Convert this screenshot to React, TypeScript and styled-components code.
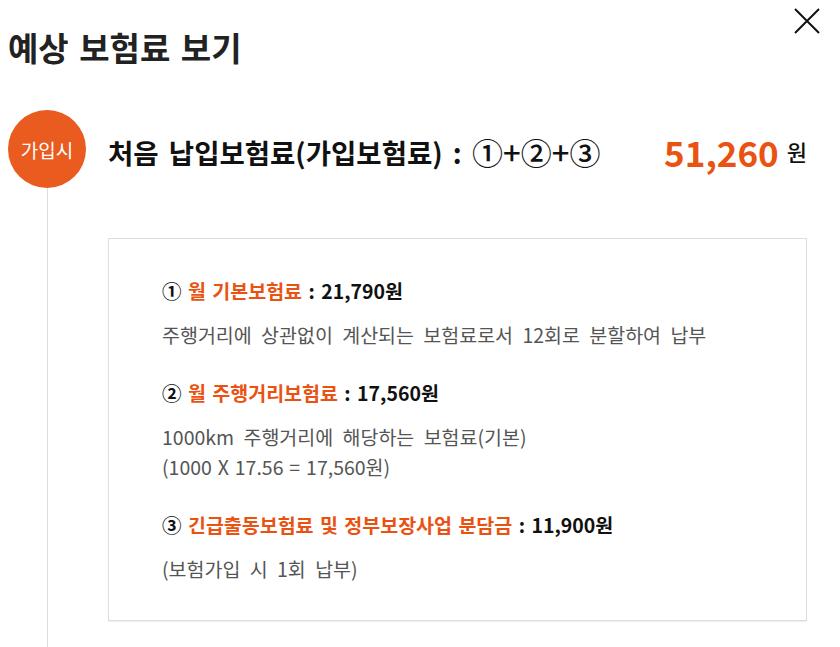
import * as React from 'react'
import styled, { createGlobalStyle } from 'styled-components'

const GlobalStyle = createGlobalStyle`
  html, body {
    margin: 0;
    padding: 0;
    background: #fff;
  }
  body {
    font-family: 'Noto Sans CJK KR', 'Noto Sans', sans-serif;
    color: #222;
  }
`

const Modal = styled.div`
  position: relative;
  width: 840px;
  height: 647px;
  overflow: hidden;
  box-sizing: border-box;
  padding: 22px 0 0 8px;
`

const Title = styled.h1`
  margin: 0;
  font-size: 33px;
  font-weight: 700;
  word-spacing: 3px;
  color: #222;
  line-height: 50px;
`

const CloseButton = styled.button`
  position: absolute;
  top: 6px;
  right: 18px;
  width: 30px;
  height: 30px;
  padding: 0;
  border: 0;
  background: none;
  cursor: pointer;
`

const Timeline = styled.div`
  display: flex;
  margin-top: 38px;
`

const Rail = styled.div`
  width: 78px;
  flex-shrink: 0;
  display: flex;
  flex-direction: column;
  align-items: center;
`

const Badge = styled.div`
  width: 78px;
  height: 78px;
  border-radius: 50%;
  background: #ea5b1f;
  color: #fff;
  font-size: 19px;
  display: flex;
  align-items: center;
  justify-content: center;
`

const Line = styled.div`
  width: 1px;
  flex: 1;
  background: #ddd;
  min-height: 460px;
`

const Content = styled.div`
  flex: 1;
  padding-left: 22px;
  padding-right: 33px;
`

const Summary = styled.div`
  display: flex;
  align-items: center;
  height: 82px;
`

const SummaryLabel = styled.span`
  flex: 1;
  font-size: 27.5px;
  font-weight: 700;
  color: #111;
  word-spacing: 4px;
`

const Formula = styled.span`
  font-size: 31px;
  font-weight: 500;
  vertical-align: -1px;
`

const Total = styled.span`
  color: #ea5212;
  font-size: 35px;
  font-weight: 700;
`

const Won = styled.span`
  font-size: 22px;
  font-weight: 500;
  color: #111;
  margin-left: 8px;
`

const DetailBox = styled.div`
  margin-top: 46px;
  border: 1px solid #ddd;
  box-shadow: 0 1px 1px rgba(0, 0, 0, 0.06);
  padding: 38px 20px 36px 53px;
  display: flex;
  flex-direction: column;
  gap: 29px;
`

const Item = styled.div`
  display: flex;
  flex-direction: column;
  gap: 15px;
`

const ItemTitle = styled.div`
  font-size: 19.5px;
  font-weight: 700;
  color: #111;
  word-spacing: 2px;
  line-height: 28px;
`

const Accent = styled.span`
  color: #ea5212;
`

const ItemDesc = styled.div`
  font-size: 19.5px;
  color: #555;
  line-height: 30px;
`

const DescLine = styled.div<{ $tight?: boolean }>`
  word-spacing: ${props => (props.$tight ? '1.5px' : '5px')};
`

const items = [
  {
    num: '①',
    name: '월 기본보험료',
    amount: '21,790원',
    desc: ['주행거리에 상관없이 계산되는 보험료로서 12회로 분할하여 납부'],
  },
  {
    num: '②',
    name: '월 주행거리보험료',
    amount: '17,560원',
    desc: ['1000km 주행거리에 해당하는 보험료(기본)', '(1000 X 17.56 = 17,560원)'],
  },
  {
    num: '③',
    name: '긴급출동보험료 및 정부보장사업 분담금',
    amount: '11,900원',
    desc: ['(보험가입 시 1회 납부)'],
  },
]

const App = () => {
  return (
    <>
      <GlobalStyle />
      <Modal>
        <Title>예상 보험료 보기</Title>
        <CloseButton aria-label="닫기">
          <svg width="30" height="30" viewBox="0 0 30 30">
            <path d="M3 3 L27 27 M27 3 L3 27" stroke="#111" strokeWidth="2" fill="none" />
          </svg>
        </CloseButton>

        <Timeline>
          <Rail>
            <Badge>가입시</Badge>
            <Line />
          </Rail>
          <Content>
            <Summary>
              <SummaryLabel>
                처음 납입보험료(가입보험료) : <Formula>①+②+③</Formula>
              </SummaryLabel>
              <Total>51,260</Total>
              <Won>원</Won>
            </Summary>

            <DetailBox>
              {items.map(item => (
                <Item key={item.num}>
                  <ItemTitle>
                    {item.num} <Accent>{item.name}</Accent> : {item.amount}
                  </ItemTitle>
                  <ItemDesc>
                    {item.desc.map(line => (
                      <DescLine key={line} $tight={line.startsWith('(1000')}>
                        {line}
                      </DescLine>
                    ))}
                  </ItemDesc>
                </Item>
              ))}
            </DetailBox>
          </Content>
        </Timeline>
      </Modal>
    </>
  )
}

export default App
